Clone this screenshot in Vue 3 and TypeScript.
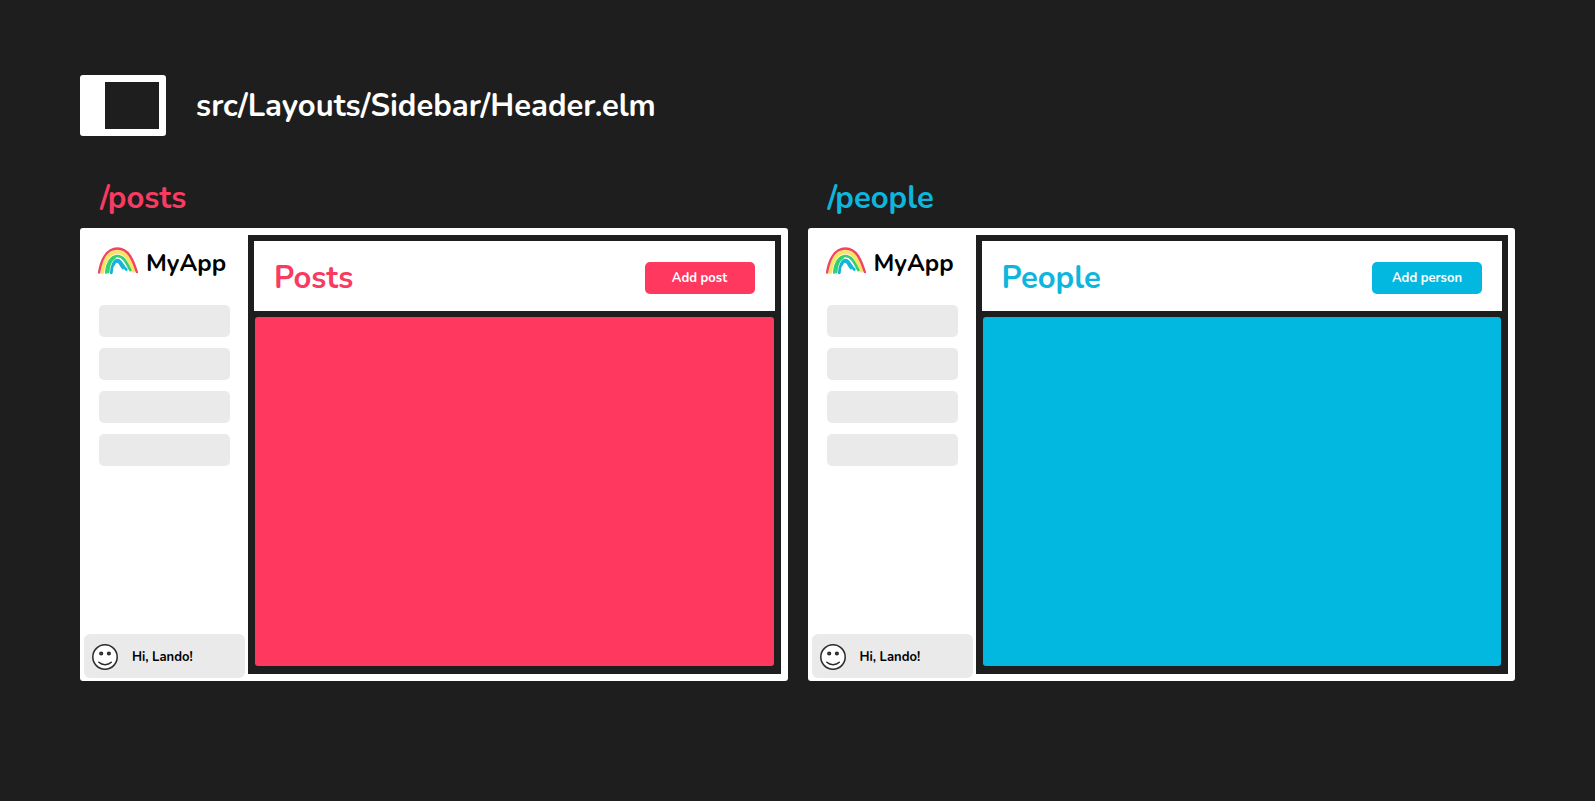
<script setup lang="ts">
interface Preview {
  key: string
  route: string
  title: string
  action: string
}

const previews: Preview[] = [
  { key: 'posts', route: '/posts', title: 'Posts', action: 'Add post' },
  { key: 'people', route: '/people', title: 'People', action: 'Add person' },
]
const navSlots = 4
</script>

<template>
  <main class="page">
    <header class="file">
      <span class="layout-icon" aria-hidden="true"><span class="layout-hole"></span></span>
      <h1 class="file-name">src/Layouts/Sidebar/Header.elm</h1>
    </header>

    <div class="previews">
      <section v-for="p in previews" :key="p.key" class="preview" :class="p.key">
        <h2 class="route">{{ p.route }}</h2>
        <div class="window">
          <aside class="sidebar">
            <div class="brand">
              <svg class="rainbow" viewBox="0 0 40 28" fill="none" stroke-linecap="round" aria-hidden="true">
                <path d="M4.200 25C5.500 14 11 5 19.500 5 28 5 31.500 13 35.300 23.500" stroke="#fbe367" stroke-width="3.800" />
                <path d="M1.100 25.500C3 13 8.500 1.500 19.500 1.500S35 13 38.800 25" stroke="#ef4560" stroke-width="2.400" />
                <path d="M8.200 25.500C8.500 18 12.500 9 19.300 9 26 9 28.500 16 32.300 23" stroke="#35d070" stroke-width="2.700" />
                <path d="M10.300 25.300C10.500 19 13 13 17 10.500" stroke="#35d070" stroke-width="2.400" />
                <path d="M13.300 26C13.600 19 16 13 19.500 13 23 13 24.500 19 28.300 22.500" stroke="#12b5d6" stroke-width="2.700" />
                <path d="M15.500 18.500C17 14 20 13.500 22 17c1 2 2 3.500 3 4.500" stroke="#12b5d6" stroke-width="2" />
              </svg>
              <span class="brand-name">MyApp</span>
            </div>
            <ul class="nav">
              <li v-for="n in navSlots" :key="n" class="nav-slot"></li>
            </ul>
            <div class="user">
              <svg class="face" viewBox="0 0 26 26" fill="none" stroke="#2a2a2a" aria-hidden="true">
                <circle cx="13" cy="13" r="12.200" fill="#fff" stroke-width="1.500" />
                <circle cx="9.200" cy="9.500" r="1.300" stroke-width="1.600" fill="#666" />
                <circle cx="16.900" cy="9.500" r="1.300" stroke-width="1.600" fill="#666" />
                <path d="M6.800 18.300c3.500 3.100 9 3.100 12.500 0" stroke-width="1.500" stroke-linecap="round" />
              </svg>
              <span class="greeting">Hi, Lando!</span>
            </div>
          </aside>
          <div class="body">
            <header class="toolbar">
              <h3 class="title">{{ p.title }}</h3>
              <button type="button" class="action">{{ p.action }}</button>
            </header>
            <div class="content"></div>
          </div>
        </div>
      </section>
    </div>
  </main>
</template>

<style>
body {
  margin: 0;
  background: #1e1e1e;
}
</style>

<style scoped>
.page {
  box-sizing: border-box;
  min-height: 100vh;
  padding: 75px 80px;
  background: #1e1e1e;
  color: #fff;
  font-family: Nunito, Lato, sans-serif;
  font-weight: 700;
}
h1, h2, h3 {
  margin: 0;
  font-size: 31px;
  line-height: 40px;
  font-weight: 700;
}
.file {
  display: flex;
  align-items: center;
  gap: 30px;
}
.layout-icon {
  display: flex;
  box-sizing: border-box;
  width: 86px;
  height: 61px;
  padding: 7px 7px 7px 25px;
  background: #fff;
  border-radius: 3px;
}
.layout-hole {
  flex: 1;
  background: #1e1e1e;
}
.previews {
  display: grid;
  grid-template-columns: 1fr 1fr;
  gap: 20px;
  margin-top: 42px;
}
.posts {
  --accent: #ff385f;
  --accent-text: #f93b62;
}
.people {
  --accent: #03b8e0;
  --accent-text: #0cb6dd;
}
.route {
  padding-left: 20px;
  color: var(--accent-text);
}
.window {
  display: flex;
  box-sizing: border-box;
  aspect-ratio: 708 / 453;
  margin-top: 10px;
  padding: 7px 7px 7px 0;
  background: #fff;
  border-radius: 3px;
}
.sidebar {
  display: flex;
  flex-direction: column;
  box-sizing: border-box;
  width: 168px;
  margin: -7px 0;
  padding: 19px 3px 3px 4px;
  color: #000;
}
.brand {
  display: flex;
  align-items: flex-start;
  gap: 8px;
  padding-left: 14px;
}
.rainbow {
  width: 40px;
  height: 28px;
}
.brand-name {
  font-size: 24px;
  line-height: 32px;
}
.nav {
  display: flex;
  flex-direction: column;
  gap: 11px;
  margin: 26px 15px 0;
  padding: 0;
  list-style: none;
}
.nav-slot {
  height: 32px;
  background: #eaeaea;
  border-radius: 5px;
}
.user {
  display: flex;
  align-items: center;
  gap: 14px;
  box-sizing: border-box;
  height: 44px;
  margin-top: auto;
  padding: 2px 0 0 8px;
  background: #eaeaea;
  border-radius: 6px;
}
.face {
  width: 26px;
  height: 26px;
}
.greeting {
  font-size: 13px;
  line-height: 18px;
}
.body {
  display: flex;
  flex: 1;
  flex-direction: column;
  gap: 6px;
  padding: 6px;
  background: #1e1e1e;
}
.toolbar {
  display: flex;
  align-items: center;
  justify-content: space-between;
  box-sizing: border-box;
  height: 70px;
  padding: 4px 20px 0;
  background: #fff;
}
.title {
  color: var(--accent-text);
}
.action {
  width: 110px;
  height: 32px;
  padding: 0;
  border: 0;
  border-radius: 5px;
  background: var(--accent);
  color: #fff;
  font: inherit;
  font-size: 13px;
  line-height: 18px;
}
.content {
  flex: 1;
  margin: 0 1px 2px;
  background: var(--accent);
  border-radius: 3px;
}
</style>
